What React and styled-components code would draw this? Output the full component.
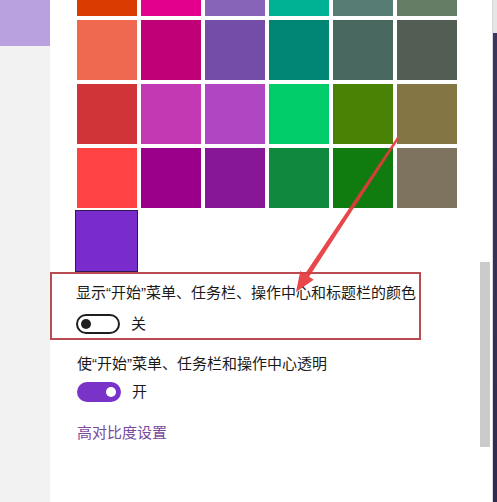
import React from "react";
import styled, { createGlobalStyle } from "styled-components";

const GlobalStyle = createGlobalStyle`
  body {
    margin: 0;
    background: #ffffff;
    font-family: "Liberation Sans", "Noto Sans CJK SC", sans-serif;
  }
`;

const swatchRows = [
  ["#DA3B01", "#E3008C", "#8764B8", "#00B294", "#567C73", "#647C64"],
  ["#EF6950", "#BF0077", "#744DA9", "#018574", "#486860", "#525E54"],
  ["#D13438", "#C239B3", "#B146C2", "#00CC6A", "#498205", "#847545"],
  ["#FF4343", "#9A0089", "#881798", "#10893E", "#107C10", "#7E735F"],
];

const Screen = styled.div`
  position: relative;
  display: flex;
  width: 497px;
  height: 502px;
  overflow: hidden;
`;

const Sidebar = styled.div`
  width: 50px;
  flex-shrink: 0;
  background: #f2f2f2;
  display: flex;
  flex-direction: column;
`;

const NavHighlight = styled.div`
  height: 46px;
  background: #b9a1e0;
`;

const Panel = styled.div`
  flex: 1;
  background: #ffffff;
  padding-left: 27px;
  display: flex;
  flex-direction: column;
  align-items: flex-start;
`;

const Palette = styled.div`
  margin-top: -44px;
  display: grid;
  grid-template-columns: repeat(6, 60px);
  grid-auto-rows: 60px;
  gap: 4px;
`;

const Swatch = styled.div`
  background: ${(p) => p.color};
`;

const CustomSwatch = styled.div`
  box-sizing: border-box;
  width: 63px;
  height: 62px;
  margin: -2px 0 0 -2px;
  background: #7a2bcc;
  border: 1px solid #2e1b4e;
`;

const Highlight = styled.div`
  box-sizing: border-box;
  width: 371px;
  margin-left: -27px;
  padding: 9px 0 4px 24px;
  border: 2px solid #b84c52;
  display: flex;
  flex-direction: column;
  gap: 11px;
`;

const Label = styled.div`
  font-size: 15px;
  line-height: 20px;
  color: #1a1a1a;
  white-space: nowrap;
`;

const ToggleRow = styled.div`
  display: flex;
  align-items: center;
  gap: 11px;
  margin-top: ${(p) => p.top || 0}px;
`;

const Toggle = styled.div`
  box-sizing: border-box;
  width: 44px;
  height: 20px;
  border-radius: 10px;
  border: 2px solid ${(p) => (p.on ? "#7a33c9" : "#1f1f1f")};
  background: ${(p) => (p.on ? "#7a33c9" : "transparent")};
  display: flex;
  align-items: center;
  justify-content: ${(p) => (p.on ? "flex-end" : "flex-start")};
  padding: 0 3px;
`;

const Knob = styled.div`
  width: 10px;
  height: 10px;
  border-radius: 50%;
  background: ${(p) => (p.on ? "#ffffff" : "#1f1f1f")};
`;

const Section = styled.div`
  margin-top: 14px;
`;

const Link = styled.div`
  margin-top: 21px;
  font-size: 15px;
  line-height: 20px;
  color: #7a4a9d;
`;

const ScrollColumn = styled.div`
  width: 12px;
  flex-shrink: 0;
  background: #ffffff;
  padding-top: 262px;
  box-sizing: border-box;
`;

const ScrollThumb = styled.div`
  width: 10px;
  height: 185px;
  background: #cbcbcb;
`;

const Desktop = styled.div`
  width: 4px;
  flex-shrink: 0;
  border-left: 1px solid #d8d8dc;
  background: linear-gradient(#e6e6e6 0, #e6e6e6 33px, #3b365e 33px, #2f2b4f 100%);
`;

const Overlay = styled.svg`
  position: absolute;
  left: 0;
  top: 0;
  pointer-events: none;
`;

const Arrow = () => (
  <Overlay width="497" height="502" viewBox="0 0 497 502">
    <polygon
      points="399,138.7 309.1,276.7 313.7,279.7 296,292 300.3,270.9 304.9,273.9 397,137.3"
      fill="#e6383c"
      fillOpacity="0.92"
    />
  </Overlay>
);

const SettingToggle = ({ on, text }) => (
  <ToggleRow top={on ? 8 : 0}>
    <Toggle on={on}>
      <Knob on={on} />
    </Toggle>
    <Label>{text}</Label>
  </ToggleRow>
);

export default function App() {
  return (
    <Screen>
      <GlobalStyle />
      <Sidebar>
        <NavHighlight />
      </Sidebar>
      <Panel>
        <Palette>
          {swatchRows.flat().map((c, i) => (
            <Swatch key={i} color={c} />
          ))}
          <CustomSwatch />
        </Palette>
        <Highlight>
          <Label>显示“开始”菜单、任务栏、操作中心和标题栏的颜色</Label>
          <SettingToggle text="关" />
        </Highlight>
        <Section>
          <Label>使“开始”菜单、任务栏和操作中心透明</Label>
          <SettingToggle on text="开" />
        </Section>
        <Link>高对比度设置</Link>
      </Panel>
      <ScrollColumn>
        <ScrollThumb />
      </ScrollColumn>
      <Desktop />
      <Arrow />
    </Screen>
  );
}
